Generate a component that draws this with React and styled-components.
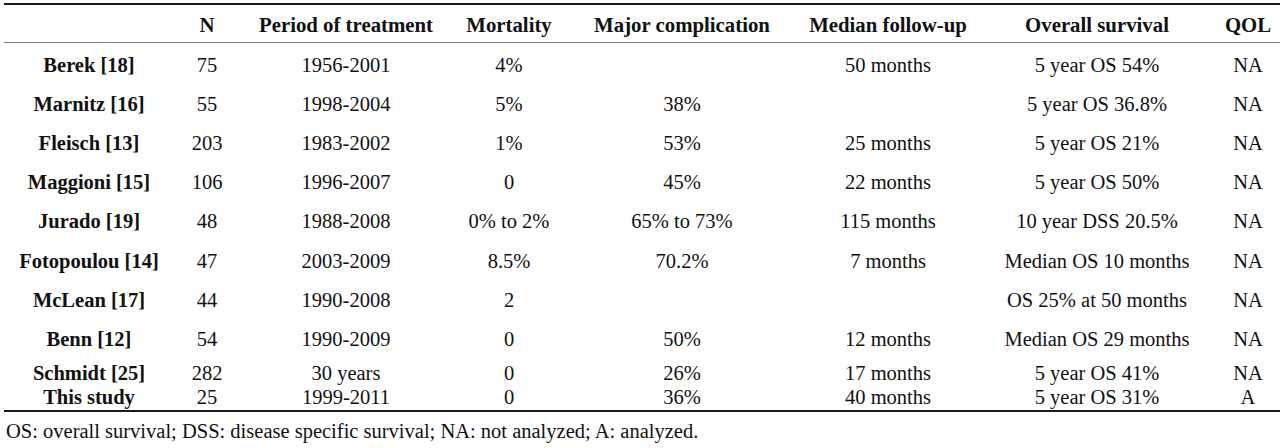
import React from "react";
import styled, { createGlobalStyle } from "styled-components";

const GlobalStyle = createGlobalStyle`
  html, body {
    margin: 0;
    padding: 0;
    background: #fff;
  }
  body {
    font-family: "Liberation Serif", "Times New Roman", serif;
    color: #111;
  }
`;

const Page = styled.div`
  width: 1282px;
  height: 448px;
  padding-top: 3px;
  box-sizing: border-box;
  overflow: hidden;
`;

const Table = styled.table`
  margin-left: 4px;
  width: 1276px;
  table-layout: fixed;
  border-collapse: collapse;
  border-top: 2px solid #1a1a1a;
  border-bottom: 2px solid #1a1a1a;
  font-size: 20.5px;
  line-height: 20px;
`;

const HeadCell = styled.th`
  height: 34px;
  padding: 3px 0 0;
  font-weight: bold;
  font-size: 20.8px;
  text-align: center;
  vertical-align: middle;
  white-space: nowrap;
  border-bottom: 1px solid #7a7a7a;
`;

const Row = styled.tr`
  height: ${(p) => p.$h}px;
`;

const Cell = styled.td`
  padding: ${(p) => p.$pt || 0}px 0 ${(p) => p.$pb || 0}px;
  text-align: center;
  vertical-align: middle;
  white-space: nowrap;
  font-weight: ${(p) => (p.$label ? "bold" : "normal")};
`;

const Note = styled.p`
  margin: 9px 0 0 6px;
  font-size: 20.5px;
  line-height: 20px;
`;

const widths = [170, 66, 212, 114, 232, 180, 238, 64];

const headers = [
  "",
  "N",
  "Period of treatment",
  "Mortality",
  "Major complication",
  "Median follow-up",
  "Overall survival",
  "QOL",
];

const rows = [
  ["Berek [18]", "75", "1956-2001", "4%", "", "50 months", "5 year OS 54%", "NA"],
  ["Marnitz [16]", "55", "1998-2004", "5%", "38%", "", "5 year OS 36.8%", "NA"],
  ["Fleisch [13]", "203", "1983-2002", "1%", "53%", "25 months", "5 year OS 21%", "NA"],
  ["Maggioni [15]", "106", "1996-2007", "0", "45%", "22 months", "5 year OS 50%", "NA"],
  ["Jurado [19]", "48", "1988-2008", "0% to 2%", "65% to 73%", "115 months", "10 year DSS 20.5%", "NA"],
  ["Fotopoulou [14]", "47", "2003-2009", "8.5%", "70.2%", "7 months", "Median OS 10 months", "NA"],
  ["McLean [17]", "44", "1990-2008", "2", "", "", "OS 25% at 50 months", "NA"],
  ["Benn [12]", "54", "1990-2009", "0", "50%", "12 months", "Median OS 29 months", "NA"],
  ["Schmidt [25]", "282", "30 years", "0", "26%", "17 months", "5 year OS 41%", "NA"],
  ["This study", "25", "1999-2011", "0", "36%", "40 months", "5 year OS 31%", "A"],
];

// row heights: regular rows are ~39px apart, the last two are squeezed
const rowSpec = (i) => {
  if (i === 0) return { h: 41.6, pt: 2.4, pb: 0 };
  if (i < 8) return { h: 39.25, pt: 0, pb: 0 };
  if (i === 8) return { h: 28, pt: 0, pb: 0 };
  return { h: 24, pt: 0, pb: 2 };
};

export default function App() {
  return (
    <Page>
      <GlobalStyle />
      <Table>
        <colgroup>
          {widths.map((w, i) => (
            <col key={i} style={{ width: w }} />
          ))}
        </colgroup>
        <thead>
          <tr>
            {headers.map((h, i) => (
              <HeadCell key={i}>{h}</HeadCell>
            ))}
          </tr>
        </thead>
        <tbody>
          {rows.map((r, i) => {
            const s = rowSpec(i);
            return (
              <Row key={i} $h={s.h}>
                {r.map((c, j) => (
                  <Cell key={j} $label={j === 0} $pt={s.pt} $pb={s.pb}>
                    {c}
                  </Cell>
                ))}
              </Row>
            );
          })}
        </tbody>
      </Table>
      <Note>
        OS: overall survival; DSS: disease specific survival; NA: not analyzed; A: analyzed.
      </Note>
    </Page>
  );
}
